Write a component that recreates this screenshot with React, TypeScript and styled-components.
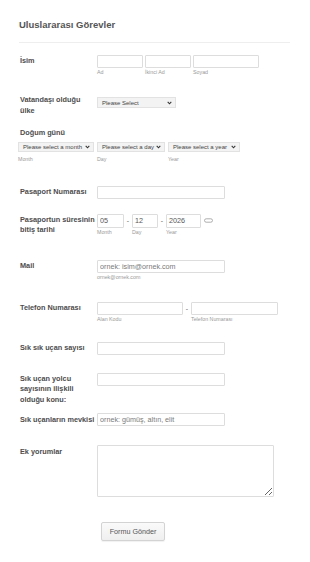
import styled, { createGlobalStyle } from 'styled-components'

const GlobalStyle = createGlobalStyle`
  html, body {
    margin: 0;
    padding: 0;
    background: #fff;
  }
  body {
    font-family: 'Liberation Sans', Arial, sans-serif;
    color: #555;
  }
`

const Page = styled.form`
  width: 310px;
  min-height: 562px;
  box-sizing: border-box;
  padding: 19px 20px 0 19px;
`

const Title = styled.h1`
  margin: 0;
  font-size: 9.5px;
  line-height: 12px;
  font-weight: bold;
  color: #555;
`

const Divider = styled.hr`
  margin: 11px 0 0;
  width: 271px;
  border: 0;
  border-top: 1px solid #eee;
`

const Row = styled.div<{ $mt: number }>`
  display: flex;
  align-items: flex-start;
  margin-top: ${({ $mt }) => $mt}px;
`

const Stack = styled.div<{ $mt: number }>`
  display: flex;
  flex-direction: column;
  margin-top: ${({ $mt }) => $mt}px;
`

const Label = styled.label<{ $pt?: number; $block?: boolean }>`
  flex: ${({ $block }) => ($block ? 'none' : '0 0 78px')};
  box-sizing: border-box;
  padding: ${({ $pt }) => $pt ?? 1.5}px 0 0 1px;
  font-size: 7.3px;
  line-height: 10.5px;
  font-weight: bold;
  color: #4d4d4d;
`

const Fields = styled.div<{ $gap?: number; $mt?: number; $ml?: number }>`
  display: flex;
  align-items: flex-start;
  gap: ${({ $gap }) => $gap ?? 0}px;
  margin-top: ${({ $mt }) => $mt ?? 0}px;
  margin-left: ${({ $ml }) => $ml ?? 0}px;
`

const Part = styled.div`
  display: flex;
  flex-direction: column;
`

const TextInput = styled.input<{ $w: number; $h?: number }>`
  width: ${({ $w }) => $w}px;
  height: ${({ $h }) => $h ?? 13}px;
  box-sizing: border-box;
  margin: 0;
  padding: 0 2px;
  border: 1px solid #ddd;
  border-radius: 1px;
  background: #fff;
  font-family: 'Liberation Sans', Arial, sans-serif;
  font-size: 7.2px;
  color: #555;
  outline: none;

  &::placeholder {
    color: #7a7a7a;
  }
`

const TextArea = styled.textarea`
  width: 177px;
  height: 52px;
  box-sizing: border-box;
  margin: 0;
  border: 1px solid #ddd;
  border-radius: 1px;
  font-family: 'Liberation Sans', Arial, sans-serif;
  font-size: 7px;
`

const SubLabel = styled.span<{ $mt?: number }>`
  margin-top: ${({ $mt }) => $mt ?? 1}px;
  font-size: 5.3px;
  line-height: 7px;
  color: #999;
`

const Dash = styled.span`
  width: 8px;
  text-align: center;
  font-size: 7px;
  line-height: 13px;
  color: #666;
`

const SelectBox = styled.div<{ $w: number; $h: number }>`
  display: flex;
  align-items: center;
  justify-content: space-between;
  width: ${({ $w }) => $w}px;
  height: ${({ $h }) => $h}px;
  box-sizing: border-box;
  padding: 0 3px 0 4px;
  border: 1px solid #e2e2e2;
  background: #f3f3f3;
  font-size: 6px;
  color: #444;
  white-space: nowrap;
`

const CalendarIcon = styled.svg`
  margin: 4px 0 0 3px;
`

const SubmitRow = styled.div`
  margin: 23px 0 0 82px;
`

const SubmitButton = styled.button`
  width: 64px;
  height: 19px;
  padding: 0;
  border: 1px solid #d3d3d3;
  border-radius: 2px;
  background: linear-gradient(#fafafa, #efefef);
  box-shadow: 0 1px 1px rgba(0, 0, 0, 0.06);
  font-family: 'Liberation Sans', Arial, sans-serif;
  font-size: 7.2px;
  color: #555;
`

function Chevron() {
  return (
    <svg width="5" height="4" viewBox="0 0 5 4">
      <polyline points="0.7,0.9 2.5,2.8 4.3,0.9" fill="none" stroke="#333" strokeWidth="1.1" />
    </svg>
  )
}

function Select({ w, h, text }: { w: number; h: number; text: string }) {
  return (
    <SelectBox $w={w} $h={h}>
      <span>{text}</span>
      <Chevron />
    </SelectBox>
  )
}

export default function App() {
  return (
    <>
      <GlobalStyle />
      <Page>
        <Title>Uluslararası Görevler</Title>
        <Divider />

        <Row $mt={12}>
          <Label $pt={0.5}>İsim</Label>
          <Fields $gap={2}>
            <Part>
              <TextInput $w={46} />
              <SubLabel>Ad</SubLabel>
            </Part>
            <Part>
              <TextInput $w={46} />
              <SubLabel>İkinci Ad</SubLabel>
            </Part>
            <Part>
              <TextInput $w={66} />
              <SubLabel>Soyad</SubLabel>
            </Part>
          </Fields>
        </Row>

        <Row $mt={19}>
          <Label $pt={0}>Vatandaşı olduğu ülke</Label>
          <Fields $mt={2}>
            <Select w={79} h={11} text="Please Select" />
          </Fields>
        </Row>

        <Stack $mt={12}>
          <Label $block $pt={0}>Doğum günü</Label>
          <Fields $gap={3} $mt={3} $ml={-1}>
            <Part>
              <Select w={76} h={10} text="Please select a month" />
              <SubLabel $mt={4}>Month</SubLabel>
            </Part>
            <Part>
              <Select w={68} h={10} text="Please select a day" />
              <SubLabel $mt={4}>Day</SubLabel>
            </Part>
            <Part>
              <Select w={72} h={10} text="Please select a year" />
              <SubLabel $mt={4}>Year</SubLabel>
            </Part>
          </Fields>
        </Stack>

        <Row $mt={23}>
          <Label>Pasaport Numarası</Label>
          <TextInput $w={128} />
        </Row>

        <Row $mt={15}>
          <Label $pt={1}>Pasaportun süresinin bitiş tarihi</Label>
          <Fields>
            <Part>
              <TextInput $w={27} $h={14} defaultValue="05" />
              <SubLabel>Month</SubLabel>
            </Part>
            <Dash>-</Dash>
            <Part>
              <TextInput $w={26} $h={14} defaultValue="12" />
              <SubLabel>Day</SubLabel>
            </Part>
            <Dash>-</Dash>
            <Part>
              <TextInput $w={35} $h={14} defaultValue="2026" />
              <SubLabel>Year</SubLabel>
            </Part>
            <CalendarIcon width="9" height="5" viewBox="0 0 9 5">
              <rect x="0.5" y="0.8" width="8" height="3.4" rx="1.7" fill="none" stroke="#999" strokeWidth="0.8" />
            </CalendarIcon>
          </Fields>
        </Row>

        <Row $mt={24}>
          <Label>Mail</Label>
          <Part>
            <TextInput $w={128} placeholder="ornek: isim@ornek.com" />
            <SubLabel>ornek@ornek.com</SubLabel>
          </Part>
        </Row>

        <Row $mt={21}>
          <Label>Telefon Numarası</Label>
          <Fields>
            <Part>
              <TextInput $w={86} />
              <SubLabel>Alan Kodu</SubLabel>
            </Part>
            <Dash>-</Dash>
            <Part>
              <TextInput $w={87} />
              <SubLabel>Telefon Numarası</SubLabel>
            </Part>
          </Fields>
        </Row>

        <Row $mt={19}>
          <Label>Sık sık uçan sayısı</Label>
          <TextInput $w={128} />
        </Row>

        <Row $mt={18}>
          <Label $pt={1}>Sık uçan yolcu sayısının ilişkili olduğu konu:</Label>
          <TextInput $w={128} />
        </Row>

        <Row $mt={8}>
          <Label>Sık uçanların mevkisi</Label>
          <TextInput $w={128} placeholder="ornek: gümüş, altın, elit" />
        </Row>

        <Row $mt={19}>
          <Label>Ek yorumlar</Label>
          <TextArea />
        </Row>

        <SubmitRow>
          <SubmitButton type="button">Formu Gönder</SubmitButton>
        </SubmitRow>
      </Page>
    </>
  )
}
